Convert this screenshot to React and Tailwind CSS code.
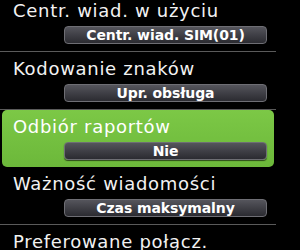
import React from 'react'

const items = [
  { title: 'Centr. wiad. w użyciu', value: 'Centr. wiad. SIM(01)' },
  { title: 'Kodowanie znaków', value: 'Upr. obsługa' },
  { title: 'Odbiór raportów', value: 'Nie', active: true },
  { title: 'Ważność wiadomości', value: 'Czas maksymalny' },
  { title: 'Preferowane połącz.', value: 'GSM' },
]

function ValueButton({ children }) {
  return (
    <div className="ml-[64px] w-[203px] h-[18px] rounded-[4px] border border-[#6e6e74] bg-gradient-to-b from-[#55555c] to-[#2b2b31] flex items-center justify-center shadow-[0_1px_1px_rgba(0,0,0,0.6)]">
      <span className="text-[14px] font-bold text-white leading-none tracking-[-0.1px]">{children}</span>
    </div>
  )
}

export default function App() {
  return (
    <div
      className="w-[300px] h-[250px] bg-black overflow-hidden"
      style={{ fontFamily: '"DejaVu Sans", "Open Sans", sans-serif' }}
    >
      <div className="w-[276px] -mt-[6px]">
        {items.map((item, i) => (
          <div
            key={i}
            className={
              item.active
                ? 'h-[57px] mx-[2px] rounded-[5px] bg-gradient-to-b from-[#7cc846] to-[#6cb83a] pt-[6px]'
                : 'h-[58px] border-b border-[#5a5a5a] pt-[6px]'
            }
          >
            <div className={item.active ? 'pl-[11px] text-[18px] leading-[22px] tracking-[0.7px] text-white' : 'pl-[13px] text-[18px] leading-[22px] tracking-[0.7px] text-[#f2f2f2]'}>
              {item.title}
            </div>
            <div className={item.active ? 'mt-[4px] -ml-[2px]' : 'mt-[4px]'}>
              <ValueButton>{item.value}</ValueButton>
            </div>
          </div>
        ))}
      </div>
    </div>
  )
}
